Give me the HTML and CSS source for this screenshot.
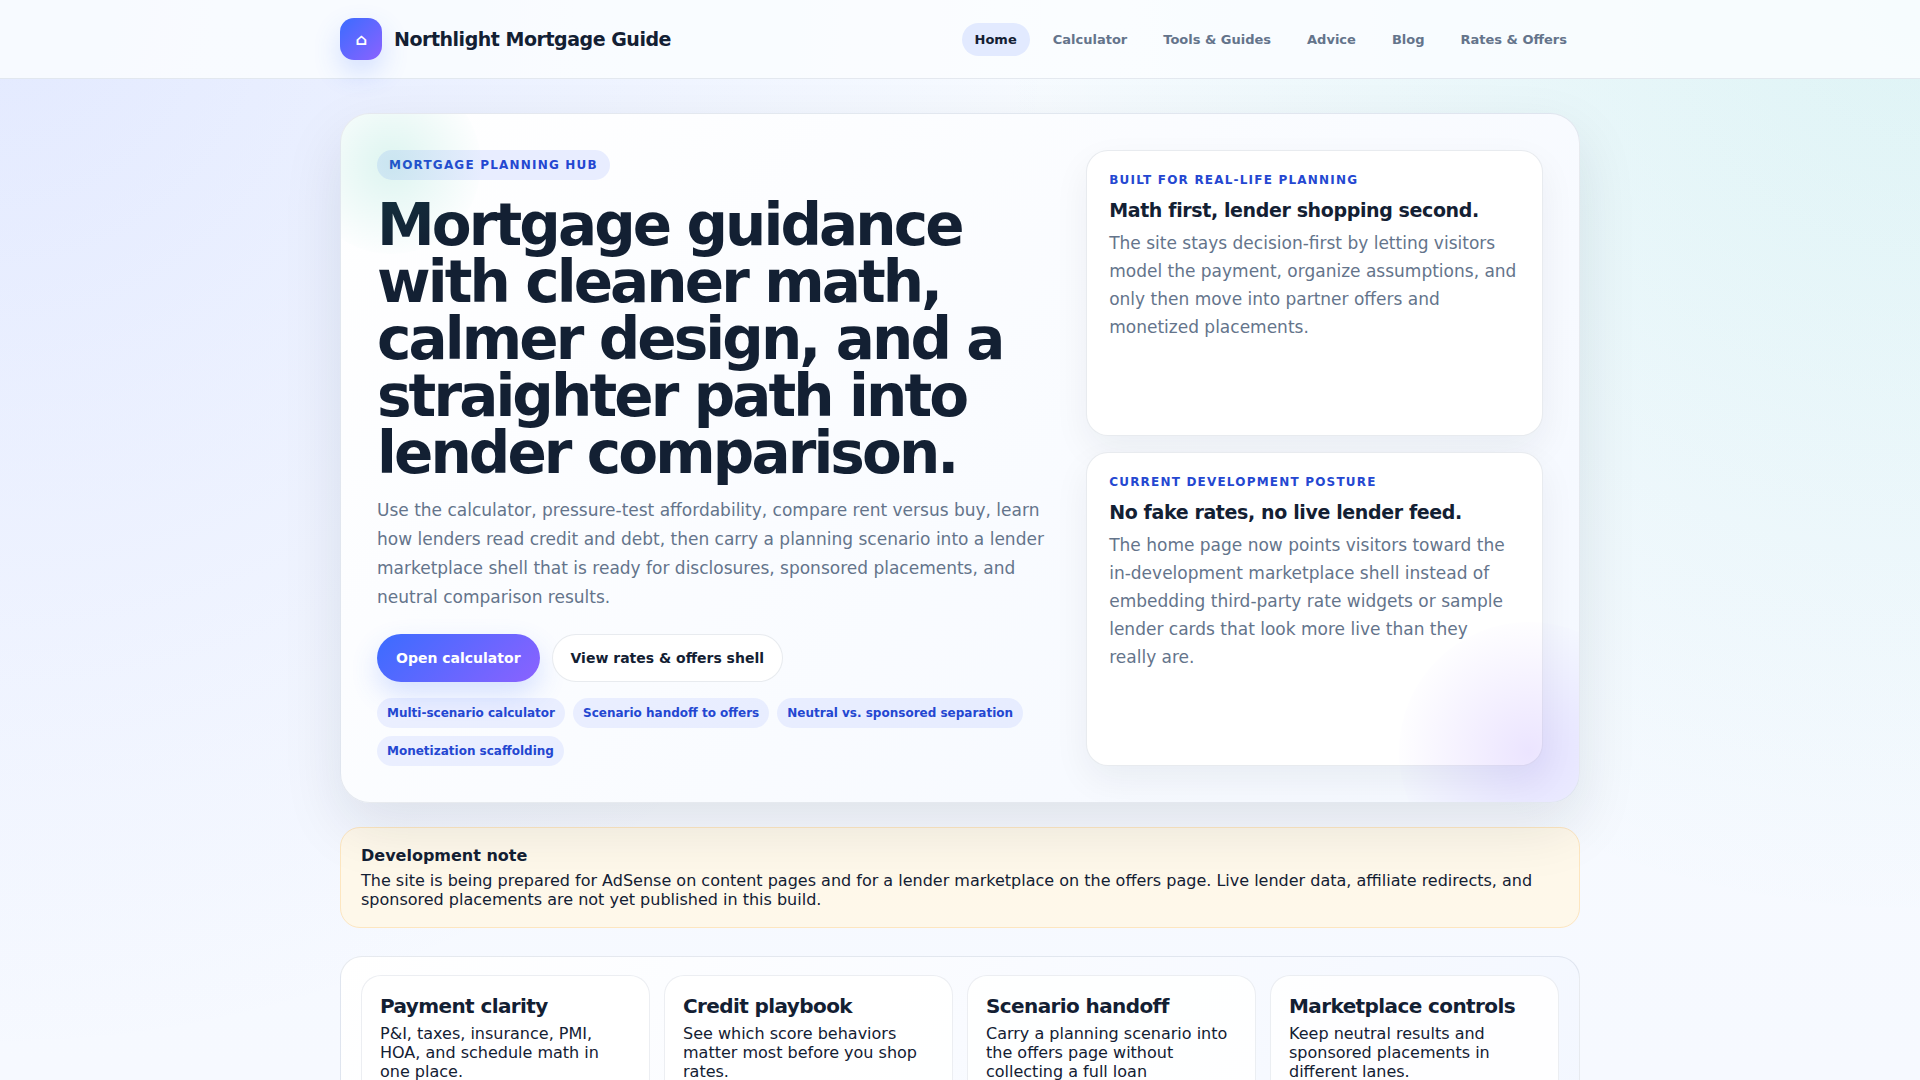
FILE: index.html
```html
<!DOCTYPE html>
<html lang="en">
<head>
    <meta charset="UTF-8">
    <meta name="viewport" content="width=device-width, initial-scale=1">
    <title>Northlight Mortgage Guide</title>
    <link rel="stylesheet" href="styles.css">
</head>
<body>

<header class="site-header">
    <div class="container header-inner">
        <a class="brand" href="#">
            <span class="brand-mark" aria-hidden="true">⌂</span>
            <span>Northlight Mortgage Guide</span>
        </a>
        <nav class="nav">
            <a class="active" href="#">Home</a>
            <a href="#">Calculator</a>
            <a href="#">Tools &amp; Guides</a>
            <a href="#">Advice</a>
            <a href="#">Blog</a>
            <a href="#">Rates &amp; Offers</a>
        </nav>
    </div>
</header>

<main class="container">
    <section class="hero">
        <div class="hero-copy">
            <span class="badge">Mortgage planning hub</span>
            <h1>Mortgage guidance with cleaner math, calmer design, and a straighter path into lender comparison.</h1>
            <p class="lead">Use the calculator, pressure-test affordability, compare rent versus buy, learn how lenders read credit and debt, then carry a planning scenario into a lender marketplace shell that is ready for disclosures, sponsored placements, and neutral comparison results.</p>
            <div class="actions">
                <button class="btn btn-primary" type="button">Open calculator</button>
                <button class="btn" type="button">View rates &amp; offers shell</button>
            </div>
            <div class="pills">
                <span class="pill">Multi-scenario calculator</span>
                <span class="pill">Scenario handoff to offers</span>
                <span class="pill">Neutral vs. sponsored separation</span>
                <span class="pill">Monetization scaffolding</span>
            </div>
        </div>
        <div class="hero-side">
            <article class="side-card">
                <div class="eyebrow">Built for real-life planning</div>
                <h2>Math first, lender shopping second.</h2>
                <p>The site stays decision-first by letting visitors model the payment, organize assumptions, and only then move into partner offers and monetized placements.</p>
            </article>
            <article class="side-card">
                <div class="eyebrow">Current development posture</div>
                <h2>No fake rates, no live lender feed.</h2>
                <p>The home page now points visitors toward the in-development marketplace shell instead of embedding third-party rate widgets or sample lender cards that look more live than they really are.</p>
            </article>
        </div>
    </section>

    <section class="note">
        <strong>Development note</strong>
        <p>The site is being prepared for AdSense on content pages and for a lender marketplace on the offers page. Live lender data, affiliate redirects, and sponsored placements are not yet published in this build.</p>
    </section>

    <section class="features">
        <article class="feature">
            <h3>Payment clarity</h3>
            <p>P&amp;I, taxes, insurance, PMI, HOA, and schedule math in one place.</p>
        </article>
        <article class="feature">
            <h3>Credit playbook</h3>
            <p>See which score behaviors matter most before you shop rates.</p>
        </article>
        <article class="feature">
            <h3>Scenario handoff</h3>
            <p>Carry a planning scenario into the offers page without collecting a full loan</p>
        </article>
        <article class="feature">
            <h3>Marketplace controls</h3>
            <p>Keep neutral results and sponsored placements in different lanes.</p>
        </article>
    </section>
</main>

</body>
</html>
```
FILE: styles.css
```css
:root {
    --text: #132033;
    --muted: #64748b;
    --blue: #2447d1;
    --line: rgba(148, 163, 184, 0.22);
    --accent: linear-gradient(135deg, #3b6cff, #8b62ff);
}

* {
    box-sizing: border-box;
}

body {
    margin: 0;
    font-family: "DejaVu Sans", sans-serif;
    font-size: 16px;
    line-height: 19px;
    color: var(--text);
    background:
        radial-gradient(circle at top left, rgba(91, 115, 255, 0.13), transparent 48%),
        radial-gradient(circle at top right, rgba(20, 184, 166, 0.11), transparent 42%),
        linear-gradient(180deg, #f7fbff, #f6f9ff);
    background-attachment: fixed;
}

h1, h2, h3, p {
    margin: 0;
}

.container {
    width: 100%;
    max-width: 1240px;
    margin: 0 auto;
}

/* header */
.site-header {
    position: sticky;
    top: 0;
    z-index: 10;
    background: rgba(250, 253, 255, 0.85);
    border-bottom: 1px solid var(--line);
}

.header-inner {
    display: flex;
    justify-content: space-between;
    align-items: center;
    padding: 18px 0;
}

.brand {
    display: flex;
    align-items: center;
    gap: 12px;
    font-size: 19px;
    font-weight: 700;
    letter-spacing: -0.025em;
    color: var(--text);
    text-decoration: none;
}

.brand-mark {
    display: grid;
    place-items: center;
    width: 42px;
    height: 42px;
    border-radius: 14px;
    background: var(--accent);
    box-shadow: 0 12px 28px rgba(59, 108, 255, 0.2);
    color: #fff;
    font-size: 16px;
}

.nav {
    display: flex;
    gap: 10px;
}

.nav a {
    padding: 9px 13px;
    border-radius: 999px;
    font-size: 13px;
    line-height: 15px;
    font-weight: 700;
    color: var(--muted);
    text-decoration: none;
}

.nav a.active {
    background: #e2eaff;
    color: var(--text);
}

/* hero */
.hero {
    position: relative;
    overflow: hidden;
    display: grid;
    grid-template-columns: 3fr 2fr;
    gap: 24px;
    margin-top: 34px;
    padding: 36px;
    border: 1px solid var(--line);
    border-radius: 30px;
    background: linear-gradient(135deg, #ffffff, #f4f8ff);
    box-shadow: 0 24px 60px rgba(19, 32, 51, 0.1);
}

.hero::before,
.hero::after {
    content: "";
    position: absolute;
    border-radius: 50%;
    pointer-events: none;
}

.hero::before {
    top: -40px;
    left: -40px;
    width: 180px;
    height: 180px;
    background: radial-gradient(circle, rgba(20, 184, 150, 0.14), transparent 75%);
}

.hero::after {
    right: -80px;
    bottom: -80px;
    width: 260px;
    height: 260px;
    background: radial-gradient(circle, rgba(124, 77, 255, 0.15), transparent 75%);
}

.badge {
    display: inline-block;
    padding: 8px 12px;
    border-radius: 999px;
    background: #e8edff;
}

.badge,
.eyebrow {
    font-size: 12px;
    line-height: 14px;
    font-weight: 700;
    letter-spacing: 0.1em;
    text-transform: uppercase;
    color: var(--blue);
}

h1 {
    margin-top: 17px;
    font-size: 58px;
    line-height: 57px;
    letter-spacing: -0.05em;
}

.lead {
    margin-top: 14px;
    font-size: 17px;
    line-height: 29px;
    color: var(--muted);
}

.actions {
    display: flex;
    flex-wrap: wrap;
    gap: 12px;
    margin-top: 22px;
}

.btn {
    padding: 15px 18px;
    border: 1px solid var(--line);
    border-radius: 999px;
    background: #fff;
    font-family: inherit;
    font-size: 14px;
    line-height: 16px;
    font-weight: 700;
    color: var(--text);
    cursor: pointer;
}

.btn-primary {
    padding: 16px 19px;
    border: none;
    background: var(--accent);
    box-shadow: 0 12px 28px rgba(59, 108, 255, 0.2);
    color: #fff;
}

.pills {
    display: flex;
    flex-wrap: wrap;
    gap: 8px;
    margin-top: 16px;
}

.pill {
    padding: 8px 10px;
    border-radius: 999px;
    background: rgba(91, 115, 255, 0.1);
    font-size: 12px;
    line-height: 14px;
    font-weight: 700;
    color: var(--blue);
}

.hero-side {
    display: grid;
    gap: 16px;
}

.side-card {
    padding: 22px;
    border: 1px solid var(--line);
    border-radius: 22px;
    background: #fff;
    box-shadow: 0 14px 36px rgba(19, 32, 51, 0.06);
}

.side-card h2 {
    margin: 12px 0 8px;
    font-size: 19px;
    line-height: 22px;
    letter-spacing: -0.02em;
}

.side-card p {
    font-size: 17px;
    line-height: 28px;
    color: var(--muted);
}

/* development note */
.note {
    margin-top: 24px;
    padding: 18px 20px;
    border: 1px solid #fde6c0;
    border-radius: 20px;
    background: rgba(255, 247, 232, 0.9);
}

.note p {
    margin-top: 6px;
}

/* feature cards */
.features {
    display: grid;
    grid-template-columns: repeat(4, 1fr);
    gap: 14px;
    margin: 28px 0;
    padding: 18px 20px;
    border: 1px solid var(--line);
    border-radius: 22px;
    background: linear-gradient(135deg, #ffffff, #f3f7ff);
}

.feature {
    padding: 18px;
    border: 1px solid rgba(148, 163, 184, 0.18);
    border-radius: 20px;
    background: rgba(255, 255, 255, 0.85);
}

.feature h3 {
    margin-bottom: 6px;
    font-size: 20px;
    line-height: 24px;
    letter-spacing: -0.03em;
}
```
